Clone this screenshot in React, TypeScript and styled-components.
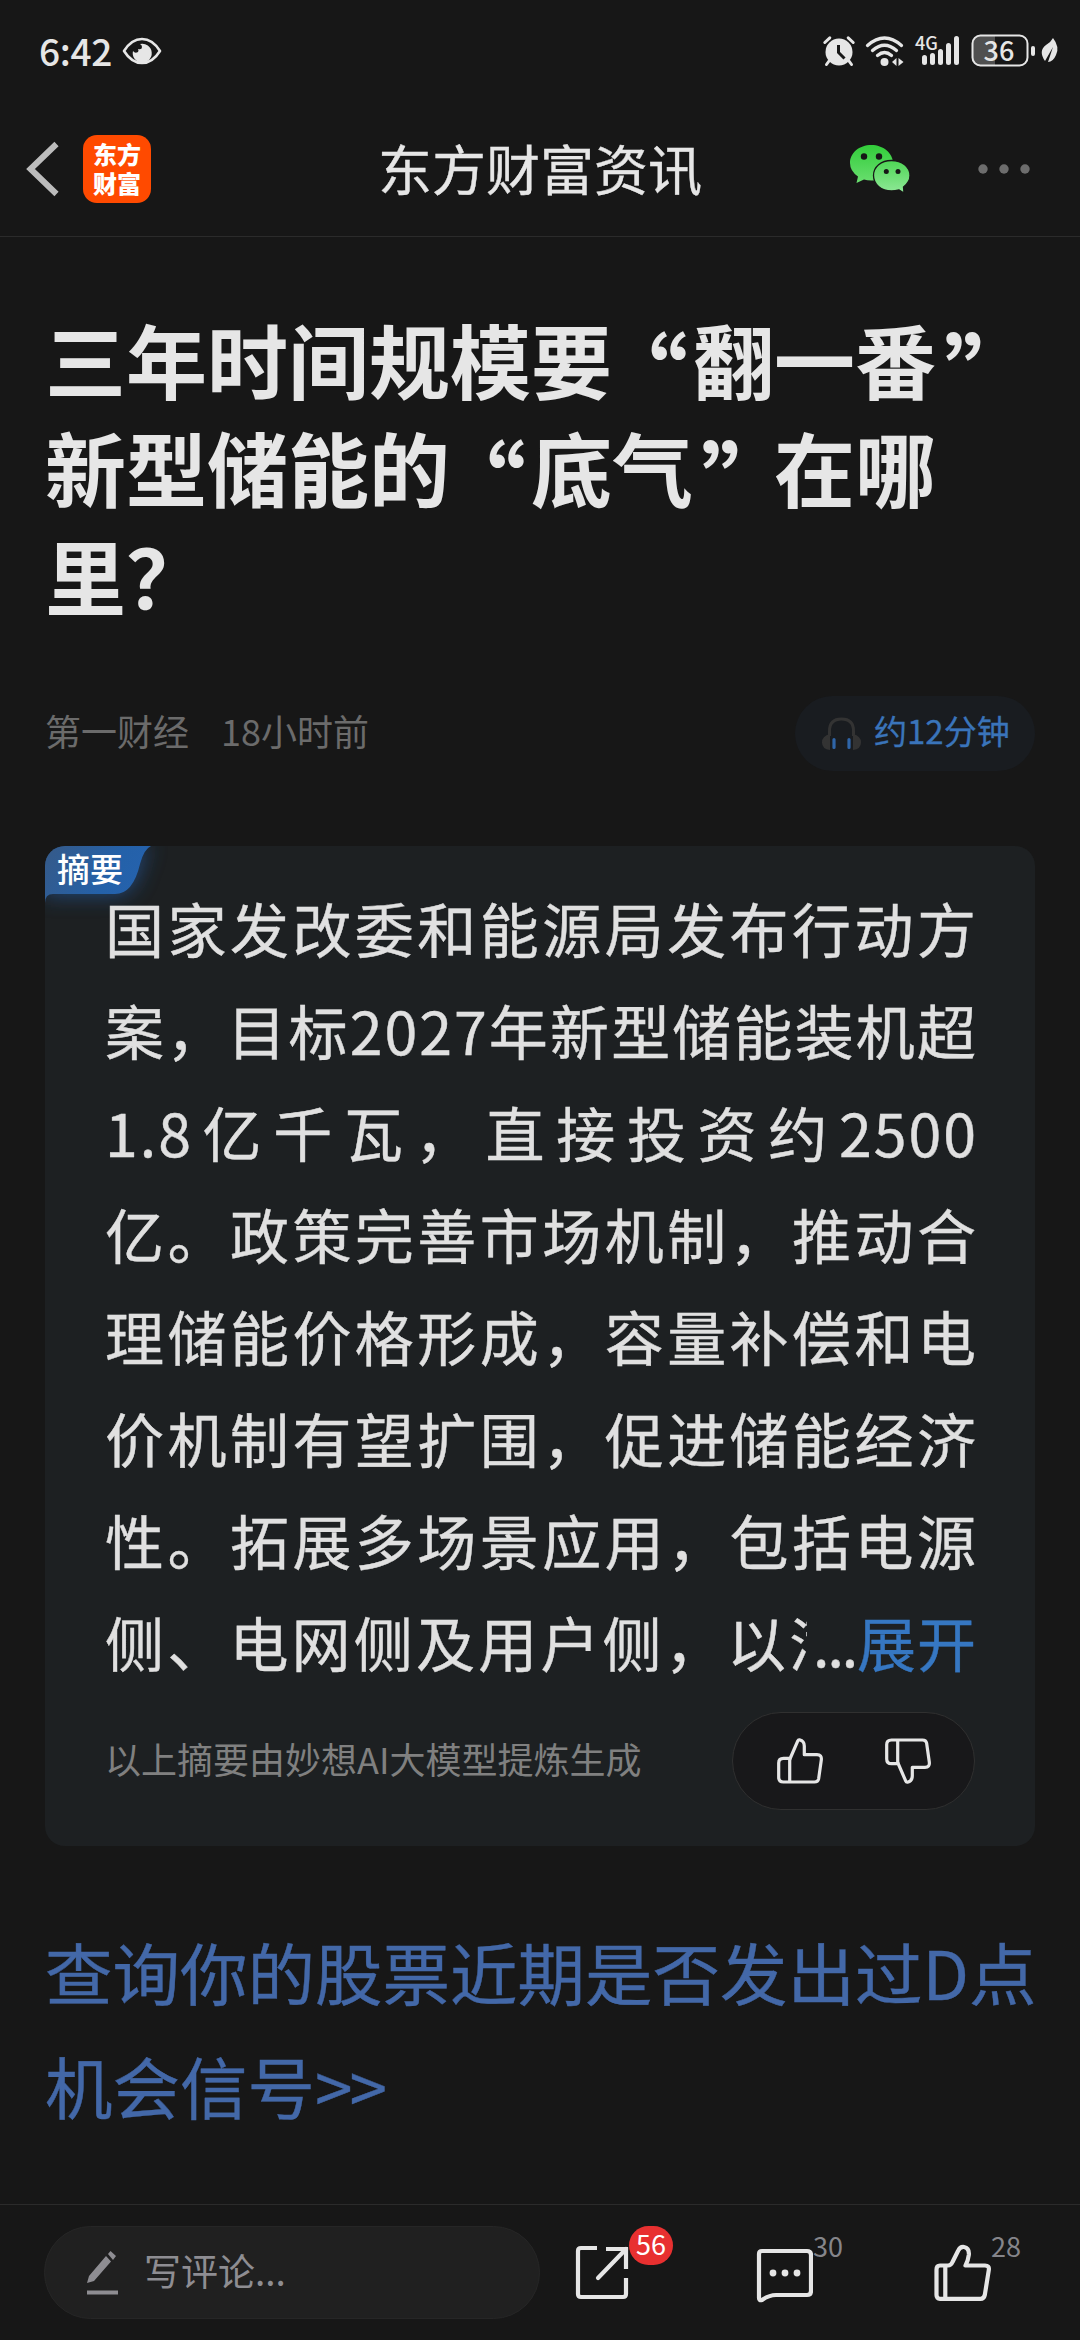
import React from "react";
import styled, { createGlobalStyle } from "styled-components";

const cjk = `"Noto Sans CJK SC", "Noto Sans", sans-serif`;

const Global = createGlobalStyle`
  * { box-sizing: border-box; }
  html, body { margin: 0; padding: 0; background: #171717; }
  body { font-family: ${cjk}; color: #e6e6e6; -webkit-font-smoothing: antialiased; }
`;

const Screen = styled.div`
  width: 1080px;
  height: 2340px;
  background: #171717;
  display: flex;
  flex-direction: column;
  overflow: hidden;
`;

const StatusBar = styled.header`
  height: 102px;
  flex: none;
  display: flex;
  justify-content: space-between;
  align-items: center;
  padding: 0 21px 0 39px;
`;

const StatusGroup = styled.div<{ $gap: number }>`
  display: flex;
  align-items: center;
  gap: ${(p) => p.$gap}px;

  svg { overflow: visible; }
`;

const PowerGroup = styled(StatusGroup)`
  padding-bottom: 1px;
`;

const Clock = styled.span`
  font: 500 37px/50px ${cjk};
  letter-spacing: -0.3px;
  width: 73px;
  padding-bottom: 2px;
  white-space: nowrap;
`;

const NavBar = styled.nav`
  height: 135px;
  flex: none;
  display: grid;
  grid-template-columns: 350px 1fr 350px;
  align-items: center;
  border-bottom: 1px solid #2b2b2b;
`;

const NavLeft = styled.div`
  display: flex;
  align-items: center;
  padding-left: 26px;
  gap: 23px;
`;

const NavRight = styled.div`
  display: flex;
  align-items: center;
  justify-content: flex-end;
  padding-right: 50px;
  gap: 67px;
`;

const NavTitle = styled.h2`
  margin: 0;
  padding-bottom: 2px;
  font: 400 54px/72px ${cjk};
  -webkit-text-stroke: 0.4px currentColor;
  text-align: center;
  white-space: nowrap;
`;

const AppLogo = styled.div`
  width: 68px;
  height: 68px;
  border-radius: 14px;
  background: #ff4a00;
  color: #fff;
  display: flex;
  flex-direction: column;
  align-items: center;
  justify-content: center;
  padding-bottom: 2px;
  font: 900 24px/29px ${cjk};
`;

const Article = styled.main`
  flex: 1;
  padding: 67px 45px 0;
  display: flex;
  flex-direction: column;
`;

const Headline = styled.h1`
  margin: 0;
  font: 700 81px/108px ${cjk};
  white-space: nowrap;
`;

const Quote = styled.span<{ $close?: boolean }>`
  display: inline-flex;
  justify-content: ${(p) => (p.$close ? "flex-start" : "flex-end")};
  width: 81px;
  padding: ${(p) => (p.$close ? "0 0 0 8px" : "0 5px 0 0")};
  font-size: 92px;
  line-height: 0;
  vertical-align: -18px;
`;

const Meta = styled.div`
  margin-top: 68px;
  height: 75px;
  display: flex;
  align-items: center;
  justify-content: space-between;
  color: #6b6b6b;
  font: 400 36px/48px ${cjk};
`;

const Source = styled.div`
  display: flex;
  gap: 32px;
  padding-bottom: 7px;
`;

const Listen = styled.div`
  width: 240px;
  height: 75px;
  border-radius: 38px;
  background: #191c20;
  color: #3a74ba;
  display: flex;
  align-items: center;
  padding-left: 26px;
  gap: 12px;
  font: 400 33px/48px ${cjk};
  -webkit-text-stroke: 0.3px currentColor;

  span { padding-bottom: 7px; }
`;

const Summary = styled.section`
  position: relative;
  margin-top: 75px;
  height: 1000px;
  border-radius: 20px;
  background: #1d2022;
  overflow: hidden;
  padding: 31px 60px 0 60px;
`;

const Tag = styled.div`
  position: absolute;
  left: 0;
  top: 0;
  width: 160px;
  height: 90px;

  svg { display: block; }
`;

const TagText = styled.span`
  position: absolute;
  left: 12px;
  top: -1px;
  font: 500 33px/46px ${cjk};
  color: #fff;
`;

const Line = styled.div`
  position: relative;
  height: 102px;
  font: 400 59px/102px ${cjk};
  -webkit-text-stroke: 0.4px currentColor;
  letter-spacing: 2px;
  margin: 0 -3px 0 0;
  color: #e0e0e0;
  text-align: justify;
  text-align-last: justify;
  white-space: nowrap;
`;

const LastLine = styled(Line)`
  display: flex;
  text-align-last: auto;
  margin-right: 0;
`;

const Clipped = styled.span`
  width: 702px;
  overflow: hidden;
  letter-spacing: 3.2px;
  flex: none;
`;

const Dots = styled.span`
  flex: 1;
  letter-spacing: -2px;
  padding-left: 6px;
`;

const Expand = styled.a`
  color: #3677c2;
  letter-spacing: 1px;
  margin-right: -2px;
`;

const SummaryFoot = styled.div`
  margin-top: 19px;
  height: 98px;
  display: flex;
  align-items: center;
  justify-content: space-between;
  color: #808080;
  font: 400 36px/48px ${cjk};
`;

const Credit = styled.span`
  padding-bottom: 6px;
`;

const Votes = styled.div`
  width: 243px;
  height: 98px;
  border-radius: 49px;
  border: 1px solid #303030;
  background: #18181a;
  display: flex;
  align-items: center;
  justify-content: center;
  gap: 60px;
`;

const Promo = styled.a`
  margin-top: 68px;
  color: #4368a8;
  font: 400 67.5px/114px ${cjk};
  -webkit-text-stroke: 0.4px currentColor;
  white-space: nowrap;
`;

const Arrows = styled.span`
  letter-spacing: -3px;
`;

const BottomBar = styled.footer`
  height: 136px;
  flex: none;
  border-top: 1px solid #2b2b2b;
  display: flex;
  align-items: flex-start;
  padding: 21px 0 0 44px;
`;

const CommentBox = styled.div`
  width: 496px;
  height: 93px;
  border-radius: 47px;
  border: 1px solid #262626;
  background: #202020;
  display: flex;
  align-items: center;
  padding-left: 41px;
  gap: 25px;
  color: #8e8d92;
  font: 400 37px/50px ${cjk};

  span { padding-bottom: 5px; }
`;

const Action = styled.div<{ $left: number }>`
  position: relative;
  margin-left: ${(p) => p.$left}px;
  width: 58px;
  height: 93px;
  svg { display: block; margin-top: 17px; }
`;

const Badge = styled.span`
  position: absolute;
  left: 55px;
  top: 0;
  width: 44px;
  height: 39px;
  border-radius: 20px;
  background: #e83030;
  color: #fff;
  font: 400 27px/36px ${cjk};
  text-align: center;
`;

const Count = styled.span`
  position: absolute;
  left: 58px;
  top: 1px;
  color: #85858a;
  font: 400 27px/38px ${cjk};
`;

const fg = "#e6e6e6";

const EyeIcon = () => (
  <svg width="40" height="28" viewBox="0 0 40 28">
    <path d="M2 14C12-2 28-2 38 14C28 30 12 30 2 14Z" fill="none" stroke={fg} strokeWidth="2.6" strokeLinejoin="round" />
    <path d="M18 7A9.5 9.5 0 1 1 11 14q2 3 5 1q1-1 0-3q4 1 4-2q0-2-2-3Z" fill={fg} />
  </svg>
);

const AlarmIcon = () => (
  <svg width="32" height="30" viewBox="0 0 32 30">
    <circle cx="16" cy="16" r="13.5" fill={fg} />
    <path d="M1.8 6.5l5-4.7M30.2 6.5l-5-4.7M6 25l-2.5 3.5M26 25l2.5 3.5" stroke={fg} strokeWidth="3" strokeLinecap="round" />
    <path d="M15.5 9v7.5l6 6" stroke="#171717" strokeWidth="3" fill="none" />
  </svg>
);

const WifiIcon = () => (
  <svg width="40" height="31" viewBox="0 0 40 31">
    <g fill="none" stroke={fg} strokeWidth="3.3" strokeLinecap="round">
      <path d="M2.5 9.5q17-15 34 0" />
      <path d="M7.5 14.5q12-10.5 24 0" />
      <path d="M12.5 19.5q7-6 14 0" />
    </g>
    <circle cx="19.5" cy="26" r="4" fill={fg} />
    <path d="M27 26l4.5-4v8zM33.5 22l5 4l-5 4z" fill={fg} />
  </svg>
);

const SignalIcon = () => (
  <svg width="46" height="32" viewBox="0 0 46 32">
    <g fill={fg}>
      <rect x="7" y="20" width="5" height="10" rx="2.5" />
      <rect x="15" y="18" width="5" height="12" rx="2.5" />
      <rect x="23" y="14" width="5" height="16" rx="2.5" />
      <rect x="31" y="8" width="5" height="22" rx="2.5" />
      <rect x="39" y="1" width="5" height="29" rx="2.5" />
      <text x="0" y="15" fontSize="18" fontWeight="500" fontFamily={cjk}>4G</text>
    </g>
  </svg>
);

const Battery = () => (
  <svg width="66" height="34" viewBox="0 0 66 34">
    <path d="M10 2H24V32H10Q2 32 2 24V10Q2 2 10 2Z" fill="#505050" />
    <rect x="1.5" y="1.5" width="55" height="30" rx="8" fill="none" stroke={fg} strokeWidth="2" />
    <rect x="60" y="12" width="4" height="10" rx="2" fill={fg} />
    <text x="28" y="26.5" fontSize="27" fontWeight="500" textAnchor="middle" fontFamily={cjk} fill={fg}>36</text>
  </svg>
);

const LeafIcon = () => (
  <svg width="18" height="27" viewBox="0 0 18 27">
    <path d="M12 1Q19 10 15 18Q12 25 7 25L12 10L4 24Q-3 14 5 8Q10 5 12 1Z" fill={fg} />
  </svg>
);

const BackIcon = () => (
  <svg width="34" height="56" viewBox="0 0 34 56">
    <path d="M30.5 3L4.5 28L30.5 53" fill="none" stroke="#bcbcbc" strokeWidth="6" />
  </svg>
);

const WechatIcon = () => (
  <svg width="62" height="50" viewBox="0 0 62 50">
    <defs>
      <linearGradient id="wa" x1="0" y1="0" x2="0" y2="1">
        <stop offset="0" stopColor="#32cd3a" />
        <stop offset="1" stopColor="#6ade70" />
      </linearGradient>
      <linearGradient id="wb" x1="0" y1="0" x2="0" y2="1">
        <stop offset="0" stopColor="#4ed655" />
        <stop offset="1" stopColor="#90e898" />
      </linearGradient>
    </defs>
    <path d="M22.5 1C34 1 44 9 44 19S34 36.5 22.5 36.5Q18 36.5 15 35.5L7.5 39L9 32.5Q1 27 1 19C1 9 10 1 22.5 1Z" fill="url(#wa)" />
    <circle cx="15" cy="12.5" r="3.2" fill="#171717" />
    <circle cx="30" cy="12.5" r="3.2" fill="#171717" />
    <path d="M42.5 16.5C53 16.5 61 23 61 31.5Q61 38 54.5 43L55 49L50 46Q46 47 42.5 47C32 47 24.5 40 24.5 31.5S32 16.5 42.5 16.5Z" fill="url(#wb)" stroke="#171717" strokeWidth="1.3" />
    <circle cx="37.3" cy="27.5" r="2.5" fill="#171717" />
    <circle cx="49" cy="27.5" r="2.5" fill="#171717" />
  </svg>
);

const MoreIcon = () => (
  <svg width="52" height="10" viewBox="0 0 52 10">
    <g fill="#6d6d6d">
      <circle cx="5" cy="5" r="4.7" />
      <circle cx="26" cy="5" r="4.7" />
      <circle cx="47" cy="5" r="4.7" />
    </g>
  </svg>
);

const HeadphoneIcon = () => (
  <svg width="41" height="36" viewBox="0 0 41 36">
    <path d="M8.5 20V15Q8.5 3 20.5 3T32.5 15V20" fill="none" stroke="#333" strokeWidth="3" />
    <path d="M9 18V34Q1 33 1 26.5T9 18ZM32 18V34Q40 33 40 26.5T32 18Z" fill="#333" />
    <path d="M13 23.5V31.5M28 23.5V31.5" stroke="#2f65a8" strokeWidth="3.2" strokeLinecap="round" />
  </svg>
);

const TagShape = () => (
  <svg width="160" height="90" viewBox="0 0 160 90">
    <defs>
      <linearGradient id="tg" x1="0" y1="0" x2="1" y2="0.3">
        <stop offset="0" stopColor="#365a88" />
        <stop offset="0.7" stopColor="#2461a9" />
        <stop offset="1" stopColor="#2562ad" />
      </linearGradient>
      <filter id="glow" x="-50%" y="-80%" width="200%" height="260%">
        <feGaussianBlur stdDeviation="11" />
      </filter>
    </defs>
    <path d="M0 0H106Q99 3 94 20Q88 48 70 48H8Q0 48 0 56Z" fill="#2562ad" opacity="0.7" filter="url(#glow)" />
    <path d="M0 0H106Q99 3 95 18Q88 48 70 48H8Q0 48 0 57Z" fill="url(#tg)" />
  </svg>
);

const LikeIcon = () => (
  <svg width="58" height="60" viewBox="0 0 58 60">
    <g fill="none" stroke={fg} strokeWidth="4.2" strokeLinejoin="round">
      <path d="M7 22.5H15Q18 22.5 19.5 19L25 8Q27 3.500 31 4Q36.500 5 35.800 12Q35 18 32.500 22.500H52Q56.500 22.500 55.800 27L51.800 52Q51 55.800 47.500 55.800H7Q3.500 55.800 3.500 52V26.500Q3.500 22.500 7 22.500Z" />
      <path d="M12.3 22.5V55.8" />
    </g>
  </svg>
);

const VoteSvg = styled.svg<{ $flip?: boolean }>`
  transform: ${(p) => (p.$flip ? "scaleY(-1)" : "none")};
`;

const VoteIcon = ({ flip }: { flip?: boolean }) => (
  <VoteSvg $flip={flip} width="48" height="48" viewBox="0 0 48 48">
    <g fill="none" stroke={fg} strokeWidth="3.2" strokeLinejoin="round">
      <path d="M13.7 21.3H7.5Q2.7 21.3 2.7 26V40.5Q2.7 45 7.5 45H38.5Q42 45 42.6 42L45.3 23Q46 17.7 41 17.7H28.3V9Q28.3 4 23.5 2.8Q22.3 2.6 21.8 3.8L13.7 22.5" />
      <path d="M13.7 21.3V45" />
    </g>
  </VoteSvg>
);

const PencilIcon = () => (
  <svg width="33" height="46" viewBox="0 0 33 46">
    <path d="M1 33L3 26L20 6L25 11.5L8 31ZM22 4L24.5 1L30 6L27 10ZM1 40.5H32V44.5H1Z" fill="#8e8d92" />
  </svg>
);

const ShareIcon = () => (
  <svg width="56" height="60" viewBox="0 0 56 60">
    <g fill="none" stroke={fg} strokeWidth="4.2" strokeLinejoin="round">
      <path d="M23 5H7Q4 5 4 8V51Q4 54 7 54H49Q52 54 52 51V35" />
      <path d="M32 6H52V26" strokeLinejoin="miter" />
      <path d="M52 6L24 35" strokeLinecap="round" />
    </g>
  </svg>
);

const ChatIcon = () => (
  <svg width="58" height="60" viewBox="0 0 58 60">
    <path d="M7 8H52Q56 8 56 12V48Q56 52 52 52H21Q14 52 7 57Q4 58 4 55V11Q4 8 7 8Z" fill="none" stroke={fg} strokeWidth="4.2" strokeLinejoin="round" />
    <g fill={fg}>
      <circle cx="18" cy="30" r="3.4" />
      <circle cx="30" cy="30" r="3.4" />
      <circle cx="42" cy="30" r="3.4" />
    </g>
  </svg>
);

const lines = [
  "国家发改委和能源局发布行动方",
  "案，目标2027年新型储能装机超",
  "1.8亿千瓦，直接投资约2500",
  "亿。政策完善市场机制，推动合",
  "理储能价格形成，容量补偿和电",
  "价机制有望扩围，促进储能经济",
  "性。拓展多场景应用，包括电源",
];

export default function App() {
  return (
    <Screen lang="zh-CN">
      <Global />
      <StatusBar>
        <StatusGroup $gap={10}>
          <Clock>6:42</Clock>
          <EyeIcon />
        </StatusGroup>
        <StatusGroup $gap={10}>
          <AlarmIcon />
          <WifiIcon />
          <SignalIcon />
          <PowerGroup $gap={4}>
            <Battery />
            <LeafIcon />
          </PowerGroup>
        </StatusGroup>
      </StatusBar>
      <NavBar>
        <NavLeft>
          <BackIcon />
          <AppLogo>
            <span>东方</span>
            <span>财富</span>
          </AppLogo>
        </NavLeft>
        <NavTitle>东方财富资讯</NavTitle>
        <NavRight>
          <WechatIcon />
          <MoreIcon />
        </NavRight>
      </NavBar>
      <Article>
        <Headline>
          三年时间规模要<Quote>“</Quote>翻一番<Quote $close>”</Quote>
          <br />
          新型储能的<Quote>“</Quote>底气<Quote $close>”</Quote>在哪
          <br />
          里？
        </Headline>
        <Meta>
          <Source>
            <span>第一财经</span>
            <span>18小时前</span>
          </Source>
          <Listen>
            <HeadphoneIcon />
            <span>约12分钟</span>
          </Listen>
        </Meta>
        <Summary>
          <Tag>
            <TagShape />
            <TagText>摘要</TagText>
          </Tag>
          {lines.map((l) => (
            <Line key={l}>{l}</Line>
          ))}
          <LastLine>
            <Clipped>侧、电网侧及用户侧，以满</Clipped>
            <Dots>...</Dots>
            <Expand>展开</Expand>
          </LastLine>
          <SummaryFoot>
            <Credit>以上摘要由妙想AI大模型提炼生成</Credit>
            <Votes>
              <VoteIcon />
              <VoteIcon flip />
            </Votes>
          </SummaryFoot>
        </Summary>
        <Promo>
          查询你的股票近期是否发出过D点
          <br />
          机会信号<Arrows>&gt;&gt;</Arrows>
        </Promo>
      </Article>
      <BottomBar>
        <CommentBox>
          <PencilIcon />
          <span>写评论...</span>
        </CommentBox>
        <Action $left={34}>
          <ShareIcon />
          <Badge>56</Badge>
        </Action>
        <Action $left={123}>
          <ChatIcon />
          <Count>30</Count>
        </Action>
        <Action $left={120}>
          <LikeIcon />
          <Count>28</Count>
        </Action>
      </BottomBar>
    </Screen>
  );
}
